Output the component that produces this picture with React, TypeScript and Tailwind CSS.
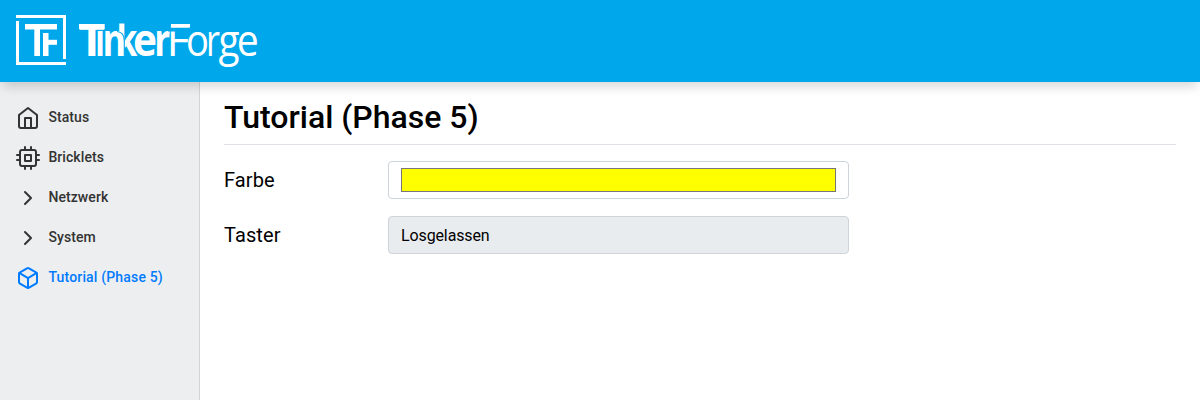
import type { ReactNode } from 'react';
import { FiBox, FiChevronRight, FiCpu, FiHome } from 'react-icons/fi';

type Letter = { char: string; x: number; width: number; bold?: boolean };

const letters: Letter[] = [
  { char: 'T', x: 78.5, width: 26.5, bold: true },
  { char: 'ı', x: 95.2, width: 9.6, bold: true },
  { char: 'n', x: 102.4, width: 23.4, bold: true },
  { char: 'k', x: 116.5, width: 20.8, bold: true },
  { char: 'e', x: 133, width: 24, bold: true },
  { char: 'r', x: 154.2, width: 16, bold: true },
  { char: 'F', x: 166.5, width: 23 },
  { char: 'o', x: 186, width: 23 },
  { char: 'r', x: 206, width: 14 },
  { char: 'g', x: 218.5, width: 21 },
  { char: 'e', x: 236.8, width: 22 },
];

function Logo() {
  return (
    <svg width="280" height="82" viewBox="0 0 280 82" role="img" aria-label="TinkerForge" className="block fill-white">
      <rect x="16" y="15" width="50" height="3" />
      <rect x="63" y="15" width="3" height="44" />
      <rect x="16" y="21" width="3" height="44" />
      <rect x="16" y="62" width="50" height="3" />
      <rect x="25" y="24" width="32" height="5.5" />
      <rect x="34.3" y="24" width="5.7" height="32" />
      <rect x="43" y="33" width="5.5" height="23" />
      <rect x="43" y="39.8" width="14" height="5" />
      {letters.map((l) => (
        <text
          key={l.x}
          x={l.x}
          y="56"
          fontSize="44"
          textLength={l.width}
          lengthAdjust="spacingAndGlyphs"
          className={l.bold ? "font-['Open_Sans',sans-serif] font-bold" : "font-['Open_Sans',sans-serif] font-normal"}
        >
          {l.char}
        </text>
      ))}
      <rect x="79" y="24" width="25.5" height="5" />
      <rect x="118" y="20" width="9" height="3.5" className="fill-[#00a8eb]" />
      <path d="M117 31.5C122.5 32 124.3 35.5 124.3 41V57" fill="none" stroke="#00a8eb" strokeWidth="1.1" />
      <rect x="168" y="27.5" width="24" height="4" className="fill-[#00a8eb]" />
      <rect x="171" y="24" width="19" height="3.5" />
    </svg>
  );
}

function NavItem({ icon, label, active }: { icon: ReactNode; label: string; active?: boolean }) {
  return (
    <a
      href="#"
      className={`flex h-10 items-center gap-2 px-4 text-sm font-medium ${active ? 'tracking-[0.17px] text-[#007bff]' : 'tracking-[0.08px] text-[#333333]'}`}
    >
      <span className="pt-0.5">{icon}</span>
      <span className="pl-[0.4px]">{label}</span>
    </a>
  );
}

function Row({ label, children }: { label: string; children: ReactNode }) {
  return (
    <div className="flex items-center">
      <div className="w-41 text-xl leading-[38px] tracking-[0.1px]">{label}</div>
      {children}
    </div>
  );
}

export default function App() {
  return (
    <div className="flex h-screen flex-col overflow-hidden bg-white font-[Roboto,sans-serif] text-black">
      <header className="relative z-10 h-[82px] shrink-0 bg-[#00a8eb] shadow-[0_8px_10px_-3px_rgba(0,0,0,0.15)]">
        <Logo />
      </header>
      <div className="flex min-h-0 flex-1">
        <nav className="w-50 shrink-0 border-r border-[#d3d4d5] bg-[#edeef0] pt-[15px]">
          <NavItem icon={<FiHome size={24} />} label="Status" />
          <NavItem icon={<FiCpu size={24} />} label="Bricklets" />
          <NavItem icon={<FiChevronRight size={24} />} label="Netzwerk" />
          <NavItem icon={<FiChevronRight size={24} />} label="System" />
          <NavItem icon={<FiBox size={24} />} label="Tutorial (Phase 5)" active />
        </nav>
        <main className="flex-1 px-6 pt-4">
          <h1 className="mb-4 border-b border-[#dee2e6] pb-2 text-[32px] leading-[38px] font-medium">
            Tutorial (Phase 5)
          </h1>
          <div className="flex flex-col gap-[17px]">
            <Row label="Farbe">
              <div className="h-[38px] w-[461px] rounded border border-[#ced4da] px-3 py-1.5">
                <div className="h-6 border border-[#767676] bg-[#ffff00]" />
              </div>
            </Row>
            <Row label="Taster">
              <div className="h-[38px] w-[461px] rounded border border-[#ced4da] bg-[#e9ecef] px-3 leading-[38px] tracking-[-0.12px]">
                Losgelassen
              </div>
            </Row>
          </div>
        </main>
      </div>
    </div>
  );
}
